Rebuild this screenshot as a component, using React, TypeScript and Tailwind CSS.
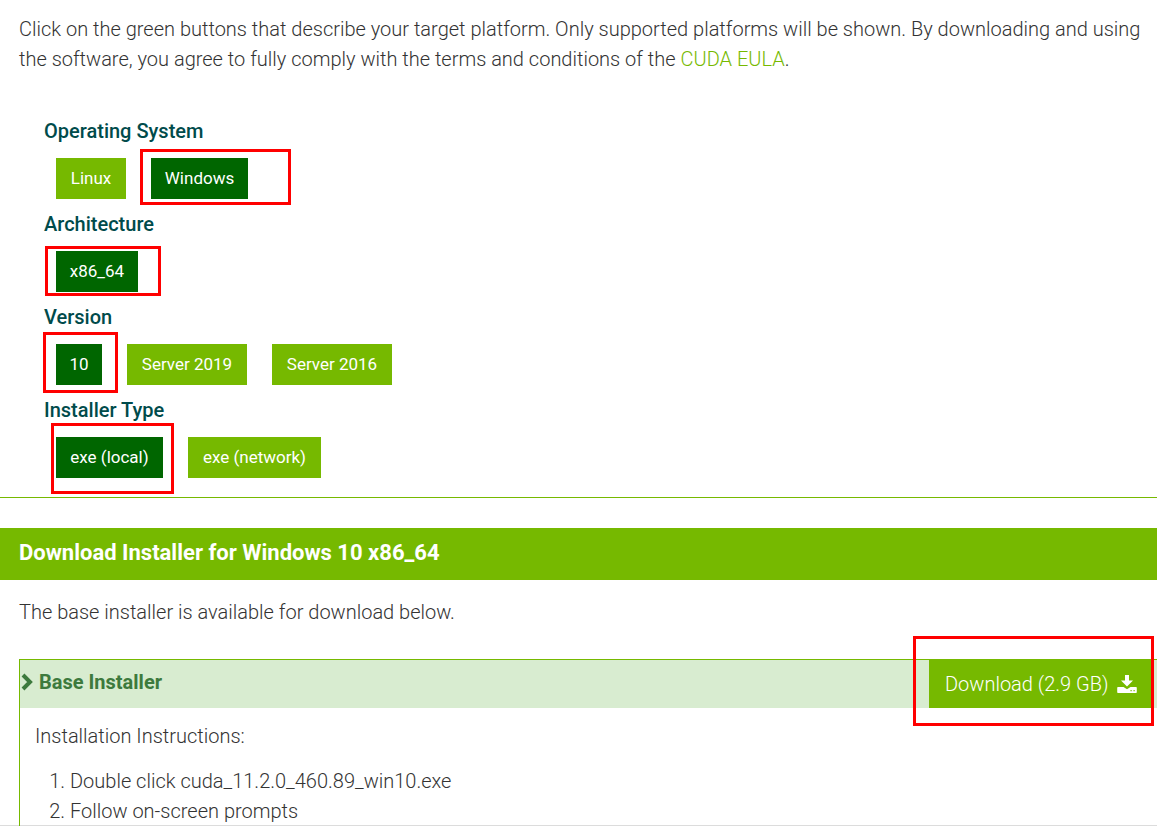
type Option = {
  label: string;
  selected?: boolean;
  width: string;
  outline?: string;
};

type Group = { title: string; options: Option[] };

const groups: Group[] = [
  {
    title: "Operating System",
    options: [
      { label: "Linux", width: "min-w-[70px]" },
      {
        label: "Windows",
        selected: true,
        width: "min-w-[97px]",
        outline: "-left-[11px] -top-[9px] -right-[43px] -bottom-[6px]",
      },
    ],
  },
  {
    title: "Architecture",
    options: [
      {
        label: "x86_64",
        selected: true,
        width: "min-w-[82px]",
        outline: "-left-[11px] -top-[5px] -right-[23px] -bottom-[4px]",
      },
    ],
  },
  {
    title: "Version",
    options: [
      {
        label: "10",
        selected: true,
        width: "min-w-[46px]",
        outline: "-left-[13px] -top-[12px] -right-[16px] -bottom-[8px]",
      },
      { label: "Server 2019", width: "min-w-[120px]" },
      { label: "Server 2016", width: "min-w-[120px]" },
    ],
  },
  {
    title: "Installer Type",
    options: [
      {
        label: "exe (local)",
        selected: true,
        width: "min-w-[107px]",
        outline: "-left-[5px] -top-[14px] -right-[11px] -bottom-[16px]",
      },
      { label: "exe (network)", width: "min-w-[133px]" },
    ],
  },
];

function Outline({ className }: { className: string }) {
  return (
    <span
      aria-hidden="true"
      className={`pointer-events-none absolute z-10 border-3 border-[#ff0000] ${className}`}
    />
  );
}

function OptionButton({ option }: { option: Option }) {
  return (
    <div className="relative">
      <button
        type="button"
        aria-pressed={!!option.selected}
        className={`block h-[41px] cursor-pointer pb-[2px] whitespace-nowrap text-center text-[17px] leading-6 font-normal text-white ${option.width} ${
          option.selected ? "bg-[#006600]" : "bg-[#76b900]"
        }`}
      >
        {option.label}
      </button>
      {option.outline && <Outline className={option.outline} />}
    </div>
  );
}

function ChevronIcon() {
  return (
    <svg viewBox="0 0 12 18" className="h-[18px] w-3" aria-hidden="true">
      <path d="M2 2l7 7-7 7" fill="none" stroke="currentColor" strokeWidth="4" />
    </svg>
  );
}

function DownloadIcon() {
  return (
    <svg viewBox="0 0 20 18" className="h-[18px] w-5" fill="currentColor" aria-hidden="true">
      <path d="M8 0h4v5.500h4L10 11.500 4 5.500h4z" />
      <path
        fillRule="evenodd"
        d="M1 12h5.500L10 14.300 13.500 12H19a.8.8 0 0 1 .8.800v4.400a.8.8 0 0 1-.8.800H1a.8.8 0 0 1-.8-.800v-4.400A.8.8 0 0 1 1 12zM13.500 15v1.200h1.200V15zM16.500 15v1.200h1.200V15z"
      />
    </svg>
  );
}

export default function App() {
  return (
    <div className="overflow-hidden bg-white font-['Roboto','Liberation_Sans',sans-serif] text-xl leading-[30px] font-light text-[#333333]">
      <main className="border-b border-[#dcdcdc]">
        <p className="pt-[14px] pl-[19px]">
          Click on the green buttons that describe your target platform. Only supported platforms
          will be shown. By downloading and using the software, you agree to fully comply with the
          terms and conditions of the{" "}
          <a href="#eula" className="text-[#76b900]">
            CUDA EULA
          </a>
          .
        </p>

        <div className="border-b border-[#76b900] pt-[42px] pb-[19px] pl-11">
          <div className="flex flex-col gap-[10px]">
            {groups.map((group) => (
              <section key={group.title} aria-label={group.title}>
                <h3 className="text-xl leading-[30px] font-medium text-[#004b4b]">{group.title}</h3>
                <div className="mt-3 flex gap-[25px] pl-3">
                  {group.options.map((option) => (
                    <OptionButton key={option.label} option={option} />
                  ))}
                </div>
              </section>
            ))}
          </div>
        </div>

        <h2 className="mt-[30px] bg-[#76b900] pt-[10px] pb-3 pl-[19px] text-[22px] leading-[30px] font-bold text-white">
          Download Installer for Windows 10 x86_64
        </h2>

        <p className="mt-[17px] pl-[19px]">The base installer is available for download below.</p>

        <section className="mt-8 ml-[19px] border-t border-l border-[#76b900]">
          <div className="flex h-12 items-center justify-between bg-[#d8ecd0]">
            <h3 className="flex items-center gap-[6px] pb-1 pl-px text-xl leading-[30px] font-bold text-[#3d7a3d]">
              <ChevronIcon />
              Base Installer
            </h3>
            <div className="relative mr-[5px]">
              <a
                href="#download"
                className="-mt-px flex h-[49px] w-[223px] items-center gap-[8px] bg-[#76b900] pl-4 whitespace-nowrap text-white"
              >
                Download (2.9 GB)
                <DownloadIcon />
              </a>
              <Outline className="-top-6 -right-[2px] -bottom-[18px] -left-4" />
            </div>
          </div>
          <div className="pt-[13px] pl-[15px]">
            <p>Installation Instructions:</p>
            <ol className="mt-[15px] -mb-px list-decimal pl-[35px]">
              <li>Double click cuda_11.2.0_460.89_win10.exe</li>
              <li>Follow on-screen prompts</li>
            </ol>
          </div>
        </section>
      </main>
    </div>
  );
}
